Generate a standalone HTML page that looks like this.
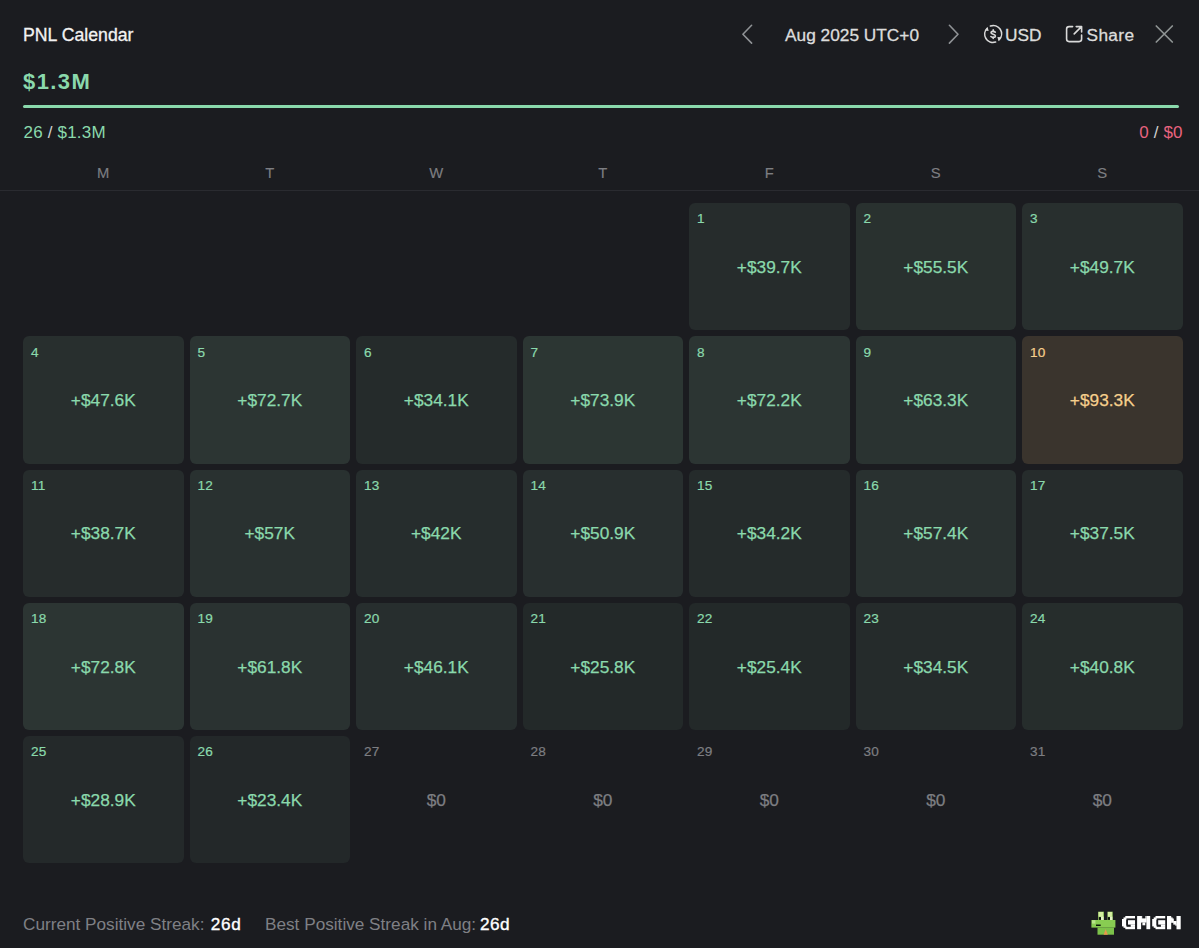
<!DOCTYPE html>
<html><head><meta charset="utf-8">
<style>
html,body{margin:0;padding:0;}
body{width:1199px;height:948px;background:#1b1c20;position:relative;overflow:hidden;font-family:"Liberation Sans",sans-serif;color:#e6e6e6;}
.abs{position:absolute;white-space:pre;line-height:1;}
.title{left:23px;top:26.7px;font-size:17.7px;color:#f2f2f2;-webkit-text-stroke:0.3px #f2f2f2;}
.total{left:23px;top:70.6px;font-size:22px;font-weight:700;letter-spacing:1.4px;color:#8ad9ac;}
.bar{position:absolute;left:23px;top:105px;width:1156px;height:3px;border-radius:2px;background:#8ad9ac;}
.cnt{left:23.5px;top:123.8px;font-size:17px;letter-spacing:0.19px;color:#8ad9ac;}
.cnt .sl{color:#d0d0d0;}
.neg{right:16.5px;top:123.8px;font-size:17px;letter-spacing:0.1px;color:#e8637f;}
.neg .sl{color:#d0d0d0;}
.wd{position:absolute;top:166.2px;width:160.5px;text-align:center;font-size:14.8px;color:#7d7e82;line-height:1;-webkit-text-stroke:0.15px #7d7e82;}
.divider{position:absolute;left:0;top:190px;width:1199px;height:1px;background:#2a2b30;}
.cell{position:absolute;width:160.5px;height:127.25px;border-radius:6px;}
.cell .dn{position:absolute;left:8px;top:9.3px;font-size:13.6px;letter-spacing:0.3px;line-height:1;color:#8ad9ac;-webkit-text-stroke:0.2px #8ad9ac;}
.cell .val{position:absolute;left:0;right:0;top:55.8px;text-align:center;font-size:17.3px;line-height:1;color:#8ad9ac;-webkit-text-stroke:0.25px #8ad9ac;}
.cell.zero .dn,.cell.zero .val{color:#7d7e82;-webkit-text-stroke-color:#7d7e82;}
.cell.best .dn,.cell.best .val{color:#f6cf8c;-webkit-text-stroke-color:#f6cf8c;}
.hdr{color:#dcdcdc;font-size:17.3px;top:26.5px;-webkit-text-stroke:0.3px #dcdcdc;}
.foot{left:23px;top:915.5px;font-size:17.2px;color:#7f8085;}
.foot b{color:#ffffff;font-weight:400;letter-spacing:0.3px;-webkit-text-stroke:0.35px #fff;}
svg{position:absolute;}
</style></head><body>
<div class="abs title">PNL Calendar</div>
<div class="abs total">$1.3M</div>
<div class="bar"></div>
<div class="abs cnt">26<span class="sl"> / </span>$1.3M</div>
<div class="abs neg">0<span class="sl"> / </span>$0</div>

<svg style="left:736px;top:20px" width="24" height="28" viewBox="0 0 24 28"><path d="M15.6 5.3 L6.9 14.2 L15.6 23.1" fill="none" stroke="#8f9295" stroke-width="1.6" stroke-linecap="round" stroke-linejoin="round"/></svg>
<div class="abs hdr" style="left:785px">Aug 2025 UTC+0</div>
<svg style="left:940px;top:20px" width="24" height="28" viewBox="0 0 24 28"><path d="M9.4 5.3 L18 14.2 L9.4 23.1" fill="none" stroke="#8f9295" stroke-width="1.6" stroke-linecap="round" stroke-linejoin="round"/></svg>

<svg style="left:980px;top:22px" width="26" height="26" viewBox="0 0 26 26">
  <g fill="none" stroke="#d9d9d9" stroke-width="1.6" stroke-linecap="round">
    <path d="M10.4 4.0 A8.3 8.3 0 0 1 19.2 17.6"/>
    <path d="M15.6 20.1 A8.3 8.3 0 0 1 7.2 6.3"/>
    <path d="M13.2 7.9 V9.1 M13.2 15.4 V16.5"/>
    <path d="M15.3 10.2 C14.6 9.2 11 8.8 11 10.7 C11 12.6 15.4 11.8 15.4 13.9 C15.4 15.9 11.8 15.6 10.9 14.5"/>
  </g>
  <path d="M5.2 8.6 L7.6 4.9 L8.6 9.0 Z" fill="#d9d9d9"/>
  <path d="M21.2 15.2 L18.6 19.3 L17.4 14.9 Z" fill="#d9d9d9"/>
</svg>
<div class="abs hdr" style="left:1005px">USD</div>

<svg style="left:1062px;top:22px" width="26" height="26" viewBox="0 0 26 26">
  <g fill="none" stroke="#d9d9d9" stroke-width="1.6" stroke-linecap="round" stroke-linejoin="round">
    <path d="M10.6 4.6 H7.1 Q4.6 4.6 4.6 7.1 V17.1 Q4.6 19.6 7.1 19.6 H17.1 Q19.6 19.6 19.6 17.1 V13.0"/>
    <path d="M12.2 11.9 L19.5 4.6 M14.2 4.6 H19.6 V10.0"/>
  </g>
</svg>
<div class="abs hdr" style="left:1086.5px;letter-spacing:0.35px">Share</div>

<svg style="left:1150px;top:20px" width="28" height="28" viewBox="0 0 28 28"><path d="M6.3 6 L22.3 22 M22.3 6 L6.3 22" fill="none" stroke="#8f9494" stroke-width="1.7" stroke-linecap="round"/></svg>

<div class="wd" style="left:23px">M</div>
<div class="wd" style="left:189.5px">T</div>
<div class="wd" style="left:356px">W</div>
<div class="wd" style="left:522.5px">T</div>
<div class="wd" style="left:689px">F</div>
<div class="wd" style="left:855.5px">S</div>
<div class="wd" style="left:1022px">S</div>
<div class="divider"></div>

<div class="cell pos" style="left:689.00px;top:203.00px;background:#262c2c"><span class="dn">1</span><span class="val">+$39.7K</span></div>
<div class="cell pos" style="left:855.50px;top:203.00px;background:#29312f"><span class="dn">2</span><span class="val">+$55.5K</span></div>
<div class="cell pos" style="left:1022.00px;top:203.00px;background:#282f2e"><span class="dn">3</span><span class="val">+$49.7K</span></div>
<div class="cell pos" style="left:23.00px;top:336.25px;background:#282f2e"><span class="dn">4</span><span class="val">+$47.6K</span></div>
<div class="cell pos" style="left:189.50px;top:336.25px;background:#2c3533"><span class="dn">5</span><span class="val">+$72.7K</span></div>
<div class="cell pos" style="left:356.00px;top:336.25px;background:#252b2b"><span class="dn">6</span><span class="val">+$34.1K</span></div>
<div class="cell pos" style="left:522.50px;top:336.25px;background:#2c3633"><span class="dn">7</span><span class="val">+$73.9K</span></div>
<div class="cell pos" style="left:689.00px;top:336.25px;background:#2c3533"><span class="dn">8</span><span class="val">+$72.2K</span></div>
<div class="cell pos" style="left:855.50px;top:336.25px;background:#2a3331"><span class="dn">9</span><span class="val">+$63.3K</span></div>
<div class="cell best" style="left:1022.00px;top:336.25px;background:#3a342d"><span class="dn">10</span><span class="val">+$93.3K</span></div>
<div class="cell pos" style="left:23.00px;top:469.50px;background:#262c2c"><span class="dn">11</span><span class="val">+$38.7K</span></div>
<div class="cell pos" style="left:189.50px;top:469.50px;background:#293130"><span class="dn">12</span><span class="val">+$57K</span></div>
<div class="cell pos" style="left:356.00px;top:469.50px;background:#262d2d"><span class="dn">13</span><span class="val">+$42K</span></div>
<div class="cell pos" style="left:522.50px;top:469.50px;background:#282f2f"><span class="dn">14</span><span class="val">+$50.9K</span></div>
<div class="cell pos" style="left:689.00px;top:469.50px;background:#252b2b"><span class="dn">15</span><span class="val">+$34.2K</span></div>
<div class="cell pos" style="left:855.50px;top:469.50px;background:#293130"><span class="dn">16</span><span class="val">+$57.4K</span></div>
<div class="cell pos" style="left:1022.00px;top:469.50px;background:#262c2c"><span class="dn">17</span><span class="val">+$37.5K</span></div>
<div class="cell pos" style="left:23.00px;top:602.75px;background:#2c3533"><span class="dn">18</span><span class="val">+$72.8K</span></div>
<div class="cell pos" style="left:189.50px;top:602.75px;background:#2a3231"><span class="dn">19</span><span class="val">+$61.8K</span></div>
<div class="cell pos" style="left:356.00px;top:602.75px;background:#272e2e"><span class="dn">20</span><span class="val">+$46.1K</span></div>
<div class="cell pos" style="left:522.50px;top:602.75px;background:#232929"><span class="dn">21</span><span class="val">+$25.8K</span></div>
<div class="cell pos" style="left:689.00px;top:602.75px;background:#232929"><span class="dn">22</span><span class="val">+$25.4K</span></div>
<div class="cell pos" style="left:855.50px;top:602.75px;background:#252b2b"><span class="dn">23</span><span class="val">+$34.5K</span></div>
<div class="cell pos" style="left:1022.00px;top:602.75px;background:#262d2c"><span class="dn">24</span><span class="val">+$40.8K</span></div>
<div class="cell pos" style="left:23.00px;top:736.00px;background:#24292a"><span class="dn">25</span><span class="val">+$28.9K</span></div>
<div class="cell pos" style="left:189.50px;top:736.00px;background:#232829"><span class="dn">26</span><span class="val">+$23.4K</span></div>
<div class="cell zero" style="left:356.00px;top:736.00px;background:transparent"><span class="dn">27</span><span class="val">$0</span></div>
<div class="cell zero" style="left:522.50px;top:736.00px;background:transparent"><span class="dn">28</span><span class="val">$0</span></div>
<div class="cell zero" style="left:689.00px;top:736.00px;background:transparent"><span class="dn">29</span><span class="val">$0</span></div>
<div class="cell zero" style="left:855.50px;top:736.00px;background:transparent"><span class="dn">30</span><span class="val">$0</span></div>
<div class="cell zero" style="left:1022.00px;top:736.00px;background:transparent"><span class="dn">31</span><span class="val">$0</span></div>

<div class="abs foot">Current Positive Streak: <b style="margin-left:1.5px;letter-spacing:0.7px">26d</b></div>
<div class="abs foot" style="left:265px">Best Positive Streak in Aug: <b style="margin-left:-1px;letter-spacing:0.5px">26d</b></div>

<svg style="left:1086px;top:906px" width="34" height="34" viewBox="0 0 34 34">
  <rect x="12.2" y="5.7" width="5.7" height="8.6" fill="#9ed468"/>
  <rect x="21.5" y="5.7" width="5.2" height="8.6" fill="#9ed468"/>
  <rect x="12.6" y="6.0" width="4.4" height="4.6" fill="#d4eea0"/>
  <rect x="21.9" y="6.0" width="4.0" height="4.6" fill="#d4eea0"/>
  <rect x="15.0" y="10.6" width="2.6" height="3.4" fill="#e4f2c8"/>
  <rect x="24.0" y="10.6" width="2.4" height="3.4" fill="#e4f2c8"/>
  <rect x="12.9" y="11.1" width="2.1" height="2.8" fill="#0b120a"/>
  <rect x="21.9" y="11.1" width="2.1" height="2.8" fill="#0b120a"/>
  <rect x="5.4" y="14.0" width="24" height="7.6" fill="#88cc52"/>
  <rect x="6.0" y="14.2" width="3.4" height="3.4" fill="#b8e48a"/>
  <rect x="10.0" y="18.5" width="4.7" height="1.5" fill="#0b140a"/>
  <rect x="11.5" y="21.5" width="16.5" height="7.2" fill="#7cc24a"/>
  <path d="M17.6 28.7 L19.7 23 L21.8 28.7 Z" fill="#e8954a"/>
</svg>
<svg style="left:1118px;top:910px" width="68" height="24" viewBox="0 0 68 24"><g fill="#ffffff"><rect x="7.30" y="6.00" width="9.70" height="2.40"/><rect x="5.50" y="7.40" width="3.00" height="2.20"/><rect x="4.00" y="9.00" width="4.10" height="7.40"/><rect x="5.50" y="15.60" width="3.00" height="2.20"/><rect x="7.30" y="16.80" width="9.70" height="2.40"/><rect x="10.00" y="10.20" width="7.00" height="4.40"/><rect x="12.70" y="14.50" width="4.30" height="2.40"/><rect x="19.10" y="6.00" width="4.00" height="13.20"/><rect x="28.40" y="6.00" width="3.80" height="13.20"/><rect x="23.10" y="6.00" width="1.10" height="6.40"/><rect x="27.40" y="6.00" width="1.00" height="6.40"/><rect x="23.10" y="8.40" width="5.30" height="4.00"/><rect x="24.40" y="12.30" width="2.90" height="3.00"/><rect x="37.50" y="6.00" width="9.70" height="2.40"/><rect x="35.70" y="7.40" width="3.00" height="2.20"/><rect x="34.20" y="9.00" width="4.10" height="7.40"/><rect x="35.70" y="15.60" width="3.00" height="2.20"/><rect x="37.50" y="16.80" width="9.70" height="2.40"/><rect x="40.20" y="10.20" width="7.00" height="4.40"/><rect x="42.90" y="14.50" width="4.30" height="2.40"/><rect x="49.00" y="6.00" width="4.20" height="13.30"/><rect x="58.50" y="6.00" width="4.20" height="13.30"/><rect x="53.10" y="7.40" width="1.50" height="3.00"/><rect x="53.10" y="8.50" width="2.70" height="4.30"/><rect x="55.30" y="11.00" width="3.30" height="3.60"/><rect x="57.40" y="14.00" width="1.20" height="1.80"/></g></svg>
</body></html>
